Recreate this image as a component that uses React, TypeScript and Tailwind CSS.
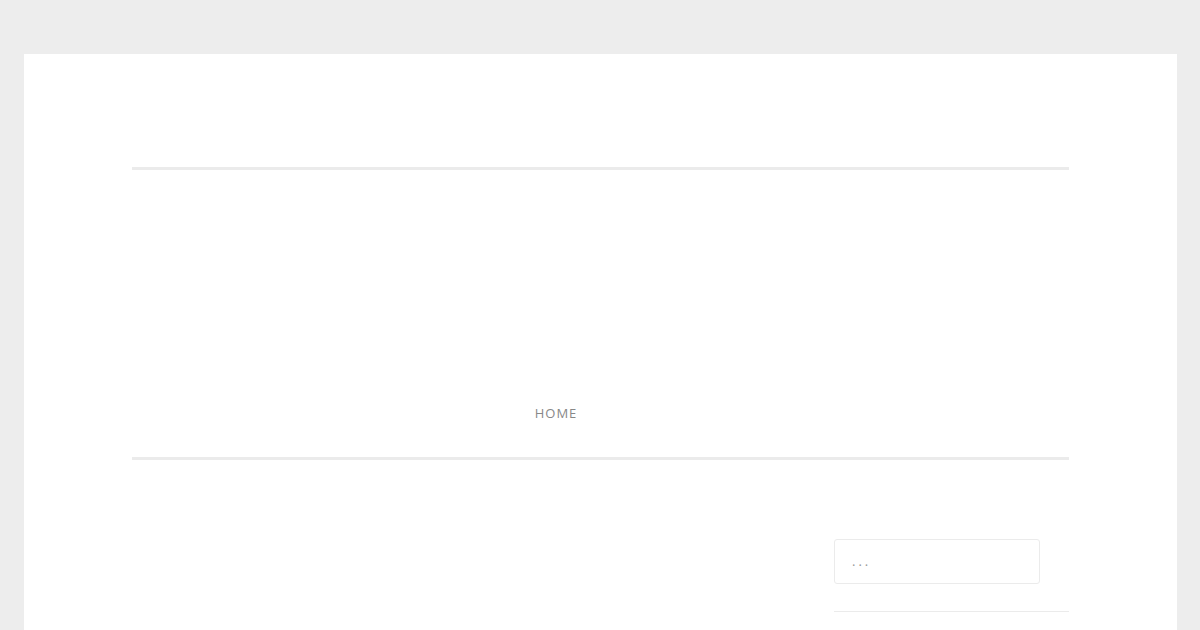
const App = () => {
  return (
    <div className="h-[630px] bg-[#ededed] pt-[54px] pl-[24px] pr-[23px] font-['Open_Sans',sans-serif] overflow-hidden">
      <div className="bg-white h-[700px] px-[108px] pt-[113px]">
        {/* Header */}
        <header className="border-t-[3px] border-b-[3px] border-[#ebebeb]">
          <div className="h-[234px]" />
          <nav className="w-[848px] flex justify-center pb-[35px]">
            <a href="#" className="text-[13px] leading-[18px] tracking-[1px] text-[#888] uppercase">
              Home
            </a>
          </nav>
        </header>

        {/* Main + sidebar */}
        <div className="flex justify-between pt-[79px]">
          <main className="flex-1" />
          <aside className="w-[235px]">
            <div className="w-[206px] h-[45px] border border-[#ebebeb] rounded-[3px] flex items-center px-[17px]">
              <input
                type="text"
                placeholder="..."
                className="w-full text-[13px] tracking-[3px] text-[#999] placeholder:text-[#999] outline-none bg-transparent"
              />
            </div>
            <div className="mt-[27px] border-t border-[#ebebeb]" />
          </aside>
        </div>
      </div>
    </div>
  );
};

export default App;
